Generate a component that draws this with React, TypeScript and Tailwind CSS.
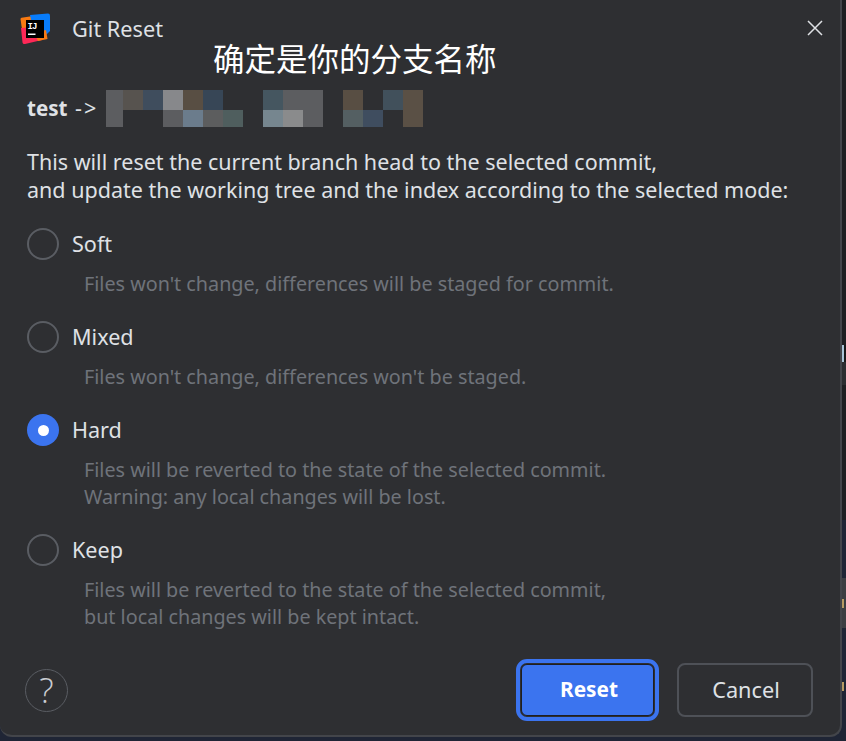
const cols = ["#5c5d60","#57534f","#3f4d5d","#87888b","#584e43","#374656","","","#455660","#5c5d60","#5c5d60","","#584e43","","#41505b","#5a5045"];
const cols2 = ["#5c5d60","","","#5c5d60","#6b7c8c","#5c5d5e","#4f5e5e","","#76868f","#8a8b8c","#5c5d60","","#545f62","#3f4d5f","","#5a5045"];

function Mosaic() {
  return (
    <div className="grid grid-cols-[17px_repeat(15,20px)] grid-rows-[20px_17px]">
      {[...cols, ...cols2].map((c, i) => (
        <div key={i} style={{ backgroundColor: c || "transparent" }} />
      ))}
    </div>
  );
}

function Logo() {
  return (
    <svg width="32" height="32" viewBox="0 0 32 32" className="block">
      <path d="M0.5 6 Q0.5 5 1.5 4.8 L13 3 L10 20 L4 30 Z" fill="#f97a12" />
      <path d="M1 15 L2.5 29.5 Q3 31.5 5 31 L22 27 L16 14 Z" fill="#fe2857" />
      <path d="M10 2 L28 0.5 Q30 0.5 30 2.5 L30 18 L26 22 L14 20 Z" fill="#087cfa" />
      <path d="M14 20 L26 17 L27.5 26 L18 28 Z" fill="#f97a12" />
      <rect x="6" y="7" width="18" height="18" fill="#000" />
      <text x="7.5" y="15.5" fill="#fff" fontSize="9" fontWeight="700" fontFamily="Liberation Mono, monospace" textLength="10">IJ</text>
      <rect x="8" y="20.5" width="7.5" height="1.5" fill="#fff" />
    </svg>
  );
}

function Option({ label, lines, checked }: { label: string; lines: string[]; checked?: boolean }) {
  return (
    <div className="flex flex-col">
      <div className="flex h-8 items-center gap-[13px]">
        {checked ? (
          <span className="flex h-8 w-8 items-center justify-center rounded-full bg-[#3b74ef]">
            <span className="h-[11px] w-[11px] rounded-full bg-white" />
          </span>
        ) : (
          <span className="h-8 w-8 rounded-full border-2 border-[#5a5d63]" />
        )}
        <span className="text-[21.6px] leading-8 text-[#dfe1e5]">{label}</span>
      </div>
      <div className="mt-[10px] pl-[57px] text-[19.75px] leading-[27px] whitespace-nowrap text-[#6f737a]">
        {lines.map((l) => (
          <div key={l}>{l}</div>
        ))}
      </div>
    </div>
  );
}

function RightStrip() {
  return (
    <div className="flex h-[741px] w-[4px] shrink-0 flex-col">
      <div className="h-[345px] bg-[#1e1f22]" />
      <div className="h-[17px] bg-[#17181a]">
        <div className="h-[17px] w-[2px] bg-[#a9c4d6]" />
      </div>
      <div className="h-[23px] bg-[#2b2d30]" />
      <div className="h-[135px] bg-[#1e1f22]" />
      <div className="h-[58px] bg-[#1f2535]" />
      <div className="flex h-[50px] items-center bg-[#3c3e42]">
        <div className="h-[9px] w-[2px] bg-[#b59a63]" />
      </div>
      <div className="h-[50px] bg-[#1f2535]" />
      <div className="flex h-[16px] items-center bg-[#1f2535]">
        <div className="h-[9px] w-[2px] bg-[#b59a63]" />
      </div>
      <div className="flex-1 bg-[#1f2535]" />
    </div>
  );
}

export default function App() {
  return (
    <div className="relative flex h-[741px] w-[846px] overflow-hidden font-['Noto_Sans','Noto_Sans_CJK_SC',sans-serif]">
      <div className="flex h-[741px] w-[842px] shrink-0 flex-col bg-[#1f2535]">
        <div className="flex h-[737px] w-[842px] flex-col rounded-b-[12px] border-r-2 border-b-2 border-[#43454a] bg-[#2e2f32] pl-[27px] pr-[27px]">
          <div className="-ml-[7px] flex h-[58px] shrink-0 items-center">
            <Logo />
            <span className="ml-[20px] text-[21.7px] text-[#dfe1e5]">Git Reset</span>
            <svg width="16" height="16" viewBox="0 0 16 16" className="ml-auto -mr-[10px] -mt-[2px]">
              <path d="M1 1 L15 15 M15 1 L1 15" stroke="#dfe1e5" strokeWidth="1.5" />
            </svg>
          </div>

          <div className="mt-[32px] flex h-[37px] items-center">
            <span className="w-[40px] text-[20.6px] font-bold text-[#dfe1e5]">test</span>
            <span className="ml-[8px] w-[31px] text-[21.5px] tracking-[2px] text-[#dfe1e5]">-&gt;</span>
            <Mosaic />
          </div>

          <div className="mt-[21px] text-[21.5px] leading-[27.5px] whitespace-nowrap text-[#dfe1e5]">
            <div>This will reset the current branch head to the selected commit,</div>
            <div>and update the working tree and the index according to the selected mode:</div>
          </div>

          <div className="mt-[25px] flex flex-col gap-[24px]">
            <Option label="Soft" lines={["Files won't change, differences will be staged for commit."]} />
            <Option label="Mixed" lines={["Files won't change, differences won't be staged."]} />
            <Option label="Hard" checked lines={["Files will be reverted to the state of the selected commit.", "Warning: any local changes will be lost."]} />
            <Option label="Keep" lines={["Files will be reverted to the state of the selected commit,", "but local changes will be kept intact."]} />
          </div>

          <div className="mt-[29px] flex items-center">
            <div className="-ml-[2px] flex h-[43px] w-[43px] items-center justify-center rounded-full border border-[#5a5d63] font-['Open_Sans',sans-serif] text-[34px] leading-none font-light text-[#c9ccd1]">?</div>
            <div className="ml-auto flex items-center gap-[18px]">
              <button className="flex h-[62px] w-[143px] items-center justify-center rounded-[11px] border-[4px] border-[#3b74ef] bg-[#2e2f32] p-[1px]">
                <span className="flex h-full w-full items-center justify-center rounded-[6px] border border-[#1e1f22] bg-[#3b74ef] pl-[3px] text-[20.8px] font-bold text-white">Reset</span>
              </button>
              <button className="h-[54px] w-[136px] rounded-[8px] border-2 border-[#4e5157] pl-[2px] text-[21.7px] text-[#dfe1e5]">Cancel</button>
            </div>
          </div>
        </div>
      </div>
      <RightStrip />
      <div className="absolute left-[213px] top-[38px] text-[31.5px] leading-[42px] whitespace-nowrap text-white">确定是你的分支名称</div>
    </div>
  );
}
